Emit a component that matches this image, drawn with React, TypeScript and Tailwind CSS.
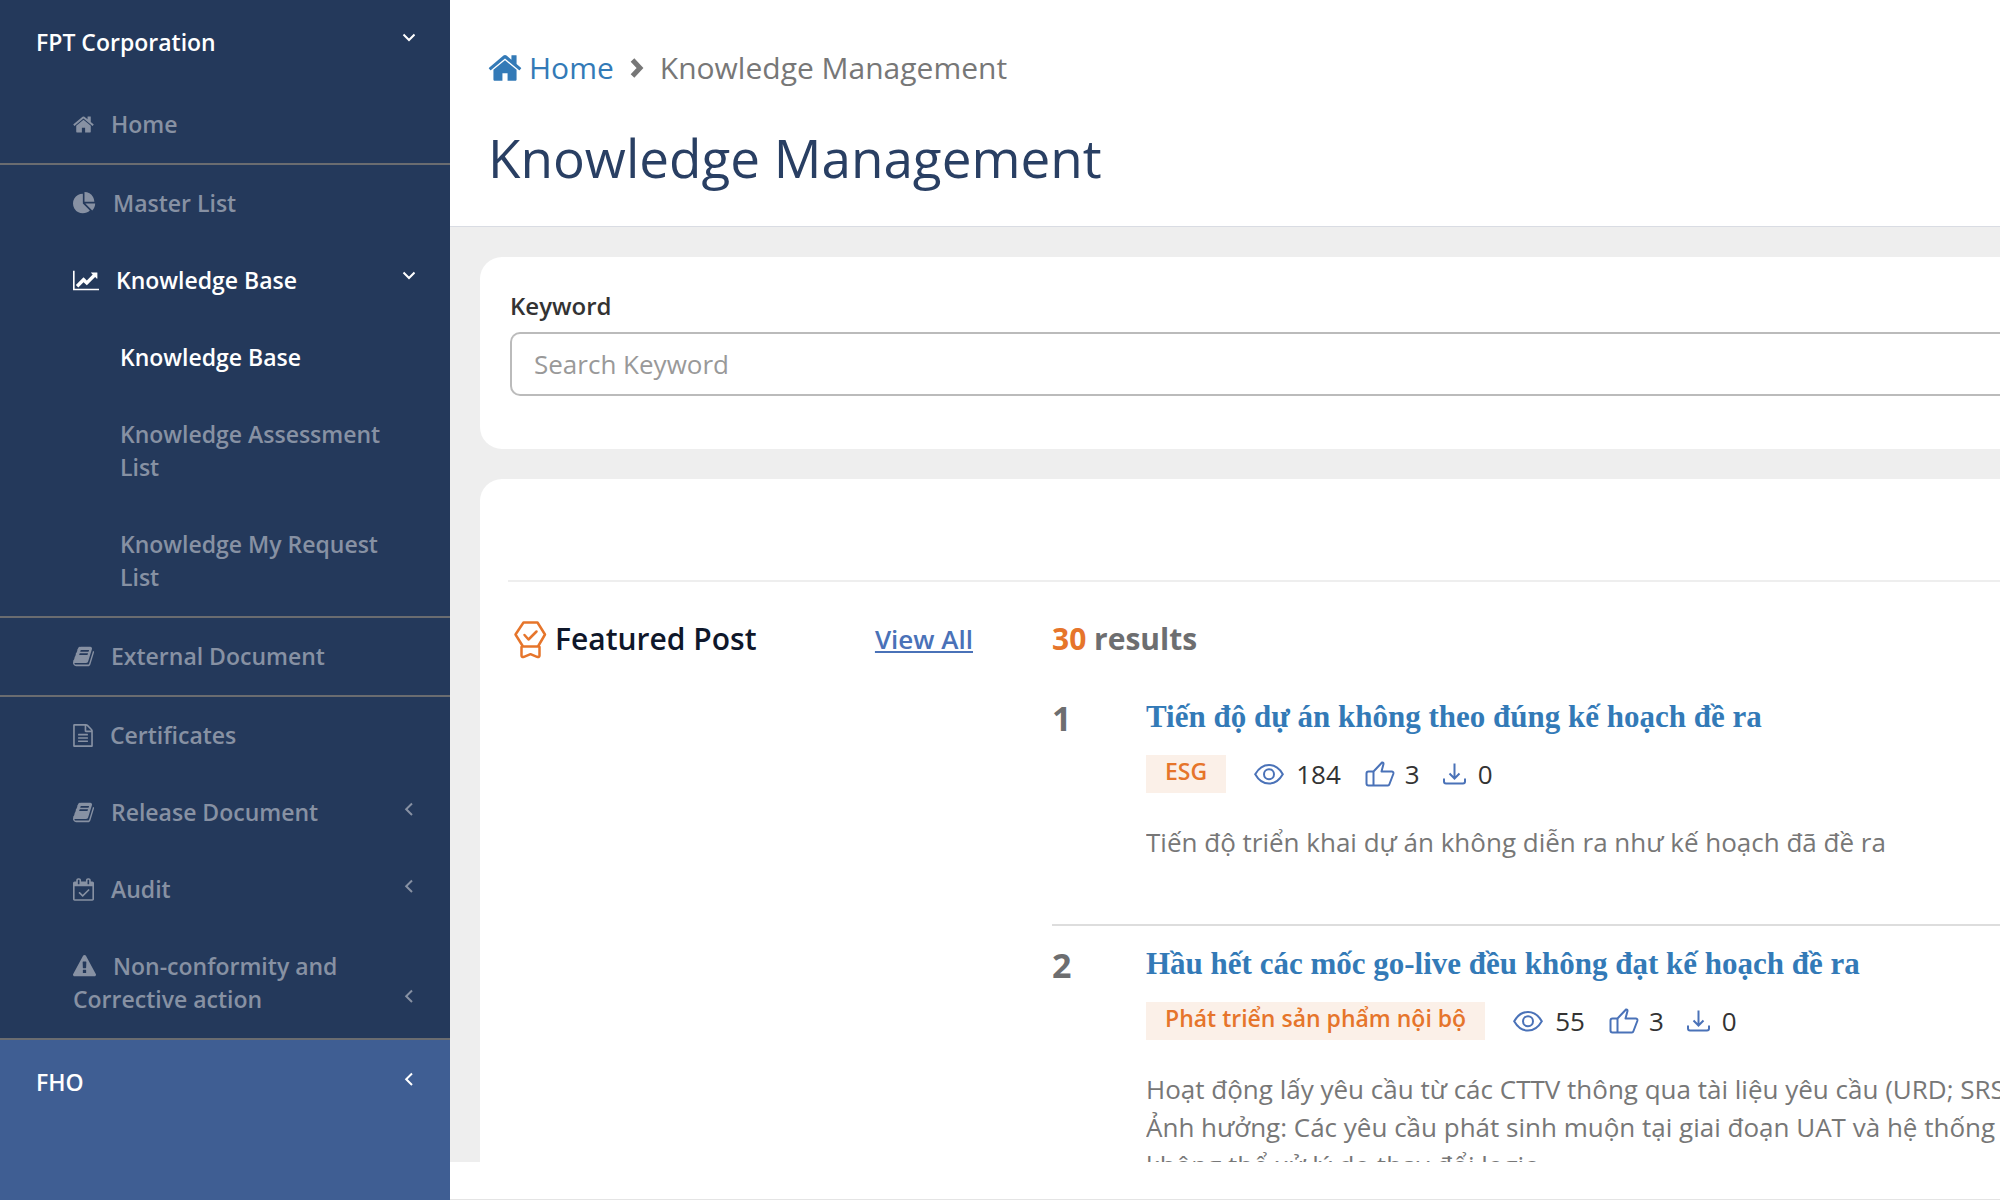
import React from "react";

type IconDef = { viewBox: string; width: number; d: string };

const icons: Record<string, IconDef> = {
  home: {
    viewBox: "0 0 1664 1792",
    width: 21,
    d: "M1408 992v480q0 26-19 45t-45 19h-384v-384h-256v384h-384q-26 0-45-19t-19-45v-480q0-1 .5-3t.5-3l575-474 575 474q1 2 1 6zm223-69l-62 74q-8 9-21 11h-3q-13 0-21-7l-692-577-692 577q-12 8-24 7-13-2-21-11l-62-74q-8-10-7-23.5t11-21.5l719-599q32-26 76-26t76 26l244 204v-195q0-14 9-23t23-9h192q14 0 23 9t9 23v408l219 182q10 8 11 21.5t-7 23.5z",
  },
  pie: {
    viewBox: "0 0 1792 1792",
    width: 23,
    d: "M768 890l546 546q-106 108-247.5 168t-298.5 60q-209 0-385.5-103t-279.5-279.5-103-385.5 103-385.5 279.5-279.5 385.5-103v762zm187 6h773q0 157-60 298.5t-168 247.5zm709-128h-768v-768q209 0 385.5 103t279.5 279.5 103 385.5z",
  },
  chart: {
    viewBox: "0 0 2048 1792",
    width: 26,
    d: "M2048 1536v128h-2048v-1536h128v1408h1920zm-128-1248v435q0 21-19.5 29.5t-35.5-7.5l-121-121-633 633q-10 10-23 10t-23-10l-233-233-416 416-192-192 585-585q10-10 23-10t23 10l233 233 464-464-121-121q-16-16-7.5-35.5t29.5-19.5h435q14 0 23 9t9 23z",
  },
  book: {
    viewBox: "64 0 1664 1792",
    width: 21,
    d: "M1703 478q40 57 18 129l-275 906q-19 64-76.5 107.5t-122.5 43.5h-923q-77 0-148.5-53.5t-99.5-131.5q-24-67-2-127 0-4 3-27t4-37q1-8-3-21.5t-3-19.5q2-11 8-21t16.5-23.5 16.5-23.5q23-38 45-91.5t30-91.5q3-10 .5-30t-.5-28q3-11 17-28t17-23q21-36 42-92t25-90q1-9-2.5-32t.5-28q4-13 22-30.5t22-22.5q19-26 42.5-84.5t27.5-96.5q1-8-3-25.5t-2-26.5q2-8 9-18t18-23 17-21q8-12 16.5-30.5t15-35 16-36 19.5-32 26.5-23.5 36-11.5 47.5 5.5l-1 3q38-9 51-9h761q74 0 114 56t18 130l-274 906q-36 119-71.5 153.5t-128.5 34.5h-869q-27 0-38 15-11 16-1 43 24 70 144 70h923q29 0 56-15.5t35-41.5l300-987q7-22 5-57 38 15 59 43zm-1064 2q-4 13 2 22.5t20 9.5h608q13 0 25.5-9.5t16.5-22.5l21-64q4-13-2-22.5t-20-9.5h-608q-13 0-25.5 9.5t-16.5 22.5zm-83 256q-4 13 2 22.5t20 9.5h608q13 0 25.5-9.5t16.5-22.5l21-64q4-13-2-22.5t-20-9.5h-608q-13 0-25.5 9.5t-16.5 22.5z",
  },
  file: {
    viewBox: "128 0 1536 1792",
    width: 20,
    d: "M1596 380q28 28 48 76t20 88v1152q0 40-28 68t-68 28h-1344q-40 0-68-28t-28-68v-1600q0-40 28-68t68-28h896q40 0 88 20t76 48zm-444-244v376h376q-10-29-22-41l-313-313q-12-12-41-22zm384 1528v-1024h-416q-40 0-68-28t-28-68v-416h-768v1536h1280zm-1024-864q0-14 9-23t23-9h704q14 0 23 9t9 23v64q0 14-9 23t-23 9h-704q-14 0-23-9t-9-23v-64zm736 224q14 0 23 9t9 23v64q0 14-9 23t-23 9h-704q-14 0-23-9t-9-23v-64q0-14 9-23t23-9h704zm0 256q14 0 23 9t9 23v64q0 14-9 23t-23 9h-704q-14 0-23-9t-9-23v-64q0-14 9-23t23-9h704z",
  },
  calendar: {
    viewBox: "0 0 1664 1792",
    width: 21,
    d: "M1303 964l-512 512q-10 9-23 9t-23-9l-288-288q-9-10-9-23t9-22l46-46q9-9 22-9t23 9l220 220 444-444q10-9 23-9t22 9l46 46q9 9 9 22t-9 23zm-1175 700h1408v-1024h-1408v1024zm384-1216v-288q0-14-9-23t-23-9h-64q-14 0-23 9t-9 23v288q0 14 9 23t23 9h64q14 0 23-9t9-23zm768 0v-288q0-14-9-23t-23-9h-64q-14 0-23 9t-9 23v288q0 14 9 23t23 9h64q14 0 23-9t9-23zm384-64v1280q0 52-38 90t-90 38h-1408q-52 0-90-38t-38-90v-1280q0-52 38-90t90-38h128v-96q0-66 47-113t113-47h64q66 0 113 47t47 113v96h384v-96q0-66 47-113t113-47h64q66 0 113 47t47 113v96h128q52 0 90 38t38 90z",
  },
  warning: {
    viewBox: "0 0 1792 1792",
    width: 23,
    d: "M1024 1375v-190q0-14-9.5-23.5t-22.5-9.5h-192q-13 0-22.5 9.5t-9.5 23.5v190q0 14 9.5 23.5t22.5 9.5h192q13 0 22.5-9.5t9.5-23.5zm-2-374l18-459q0-12-10-19-13-11-24-11h-220q-11 0-24 11-10 7-10 21l17 457q0 10 10 16.5t24 6.5h185q14 0 23.5-6.5t10.5-16.5zm-14-934l768 1408q35 63-2 126-17 29-46.5 46t-63.5 17h-1536q-34 0-63.5-17t-46.5-46q-37-63-2-126l768-1408q17-31 47-49t65-18 65 18 47 49z",
  },
};

type NavEntry = {
  label: string;
  icon?: keyof typeof icons;
  arrow?: "down" | "left";
  active?: boolean;
  sub?: boolean;
};

// each group is closed by a divider line
const groups: NavEntry[][] = [
  [{ label: "Home", icon: "home" }],
  [
    { label: "Master List", icon: "pie" },
    { label: "Knowledge Base", icon: "chart", arrow: "down", active: true },
    { label: "Knowledge Base", sub: true, active: true },
    { label: "Knowledge Assessment List", sub: true },
    { label: "Knowledge My Request List", sub: true },
  ],
  [{ label: "External Document", icon: "book" }],
  [
    { label: "Certificates", icon: "file" },
    { label: "Release Document", icon: "book", arrow: "left" },
    { label: "Audit", icon: "calendar", arrow: "left" },
    { label: "Non-conformity and Corrective action", icon: "warning", arrow: "left" },
  ],
];

const posts = [
  {
    title: "Tiến độ dự án không theo đúng kế hoạch đề ra",
    tag: "ESG",
    views: 184,
    likes: 3,
    downloads: 0,
    lines: ["Tiến độ triển khai dự án không diễn ra như kế hoạch đã đề ra"],
  },
  {
    title: "Hầu hết các mốc go-live đều không đạt kế hoạch đề ra",
    tag: "Phát triển sản phẩm nội bộ",
    views: 55,
    likes: 3,
    downloads: 0,
    lines: [
      "Hoạt động lấy yêu cầu từ các CTTV thông qua tài liệu yêu cầu (URD; SRS)",
      "Ảnh hưởng: Các yêu cầu phát sinh muộn tại giai đoạn UAT và hệ thống",
      "không thể xử lý do thay đổi logic",
    ],
  },
];

function Arrow({ dir }: { dir: "down" | "left" }) {
  return (
    <svg width="14" height="33" viewBox="0 0 14 33" fill="none" stroke="currentColor" strokeWidth="2" className="shrink-0">
      <path d={dir === "down" ? "M2.5 8.5L8 14L13.5 8.5" : "M11 7.5L5.2 13.2L11 19"} />
    </svg>
  );
}

function NavItem({ label, icon, arrow, active, sub }: NavEntry) {
  const def = icon ? icons[icon] : null;
  const cls = `flex w-full items-end py-[22px] pr-[35px] text-left ${sub ? "pl-[120px]" : "pl-[73px]"} ${
    active ? "text-white" : "text-[#8791a3]"
  }`;
  const content = (
    <>
      <span className={sub ? "max-w-[270px] flex-1" : "flex-1"}>
        {def && (
          <svg viewBox={def.viewBox} width={def.width} height={23} fill="currentColor" className="mr-[17px] inline-block align-[-3px]">
            <path d={def.d} />
          </svg>
        )}
        {label}
      </span>
      {arrow && <Arrow dir={arrow} />}
    </>
  );
  if (arrow) {
    return (
      <button type="button" className={cls}>
        {content}
      </button>
    );
  }
  return (
    <a href="#" className={cls}>
      {content}
    </a>
  );
}

function Sidebar() {
  return (
    <nav className="flex w-[450px] shrink-0 flex-col bg-[#3f5e93] text-[23px] leading-[33px] font-semibold text-white">
      <div className="bg-[#24395b]">
        <button type="button" className="flex w-full justify-between pt-[26px] pr-[35px] pb-[27px] pl-9 text-left">
          FPT Corporation
          <Arrow dir="down" />
        </button>
        {groups.map((group, i) => (
          <div key={i} className="border-b-2 border-[#6a6c70]">
            {group.map((item, j) => (
              <NavItem key={j} {...item} />
            ))}
          </div>
        ))}
      </div>
      <button type="button" className="flex w-full justify-between py-[26px] pr-[35px] pl-9 text-left">
        FHO
        <Arrow dir="left" />
      </button>
    </nav>
  );
}

function Stats({ views, likes, downloads }: { views: number; likes: number; downloads: number }) {
  return (
    <div className="flex items-center text-[26px] leading-[38px] text-[#333]">
      <svg width="30" height="38" viewBox="0 0 30 38" fill="none" stroke="#4a72b8" strokeWidth="2">
        <path d="M1.2 19.2C4.5 13.5 9 10 15 10S25.500 13.5 28.8 19.2C25.5 25 21 28.500 15 28.5S4.5 25 1.2 19.2Z" />
        <circle cx="15" cy="19.2" r="5" />
      </svg>
      <span className="ml-3">{views}</span>
      <svg width="30" height="38" viewBox="0 0 30 38" fill="none" stroke="#4a72b8" strokeWidth="2" strokeLinejoin="round" className="ml-6">
        <path d="M8.5 16.5H3.5Q1.5 16.500 1.5 18.5V28.5Q1.5 30.5 3.5 30.5H23Q24 30.5 24.5 29L28.3 19Q28.8 16.800 27 16.500H16.5L18.5 9Q18.6 7 17 7.500L8.5 16.500V30.5" />
      </svg>
      <span className="ml-[10px]">{likes}</span>
      <svg width="24" height="38" viewBox="0 0 24 38" fill="none" stroke="#4a72b8" strokeWidth="2" className="ml-[22px]">
        <path d="M12.5 8.5V23.5M7.5 18.5L12.500 23.5L17.500 18.5M2 23.5V26.5Q2 28.5 4 28.5H21Q23 28.5 23 26.500V23.500" />
      </svg>
      <span className="ml-3">{downloads}</span>
    </div>
  );
}

export default function App() {
  return (
    <div className="flex h-screen min-h-[600px] overflow-hidden bg-white font-['Open_Sans','Noto_Sans',sans-serif]">
      <Sidebar />
      <div className="flex min-w-0 flex-1 flex-col border-b border-[#e4e4e4]">
        <header className="shrink-0 border-b border-[#d9dce3] px-[38px] pt-[47px] pb-[31px]">
          <div className="flex items-center text-[30px] leading-[42px] text-[#777]">
            <a href="#" className="flex items-center text-[#337ab7]">
              <svg width="34" height="36" viewBox={icons.home.viewBox} fill="currentColor" className="mr-[7px]">
                <path d={icons.home.d} />
              </svg>
              Home
            </a>
            <svg width="14" height="20" viewBox="0 0 14 20" fill="none" stroke="#777" strokeWidth="5" className="mx-4">
              <path d="M2.5 2L10 10L2.5 18" />
            </svg>
            <span>Knowledge Management</span>
          </div>
          <h1 className="mt-8 text-[53px] leading-[74px] text-[#293f63]">Knowledge Management</h1>
        </header>

        <main className="min-h-0 flex-1 overflow-hidden bg-[#eee] pt-[30px] pl-[30px]">
          <section className="rounded-l-[22px] bg-white pt-8 pb-[53px] pl-[30px]">
            <label htmlFor="keyword" className="block text-[24px] leading-[33px] font-semibold text-[#333]">
              Keyword
            </label>
            <input
              id="keyword"
              type="text"
              placeholder="Search Keyword"
              className="mt-[10px] block h-16 w-full rounded-l-[10px] border-2 border-r-0 border-[#bbb] px-[22px] text-[26px] placeholder:text-[#999]"
            />
          </section>

          <section className="mt-[30px] rounded-l-[22px] bg-white pt-[101px] pl-7">
            <div className="flex border-t-2 border-[#eee] pt-9">
              <div className="flex w-[465px] shrink-0 items-center self-start leading-[42px]">
                <svg width="34" height="40" viewBox="0 0 34 40" fill="none" stroke="#e6752b" strokeWidth="2.5" strokeLinejoin="round" strokeLinecap="round" className="mr-[7px] ml-[6px]">
                  <path d="M9.5 3.5H23.5L31 15.500L24 27.5H9L1.5 15.5Z" />
                  <path d="M10.5 16L14.5 20.5L22.5 12.5" />
                  <path d="M7.5 28V36.5Q7.5 38.5 10 37.8L16.5 35.2L23 37.8Q25.5 38.5 25.5 36.5V28" />
                </svg>
                <h2 className="text-[30px] font-semibold text-[#0f172a]">Featured Post</h2>
                <a href="#" className="ml-auto text-[26px] font-semibold text-[#4a72b8] underline">
                  View All
                </a>
              </div>
              <div className="ml-[79px] min-w-0 flex-1">
                <h2 className="text-[30px] leading-[42px] font-bold text-[#6d6e70]">
                  <span className="text-[#e6752b]">30</span> results
                </h2>
                <ol className="mt-[19px]">
                  {posts.map((post, i) => (
                    <li key={i} className="flex border-b-2 border-[#ddd] pt-4 pb-[63px]">
                      <span className="w-[94px] shrink-0 text-[34px] leading-[46px] font-bold text-[#6d6e70]">{i + 1}</span>
                      <div className="min-w-0 flex-1 overflow-hidden">
                        <a href="#" className="mt-1 block font-['Liberation_Serif',serif] text-[31px] leading-9 font-bold text-[#337ab7]">
                          {post.title}
                        </a>
                        <div className="mt-5 flex gap-7">
                          <span className="bg-[#fbf0e8] px-[19px] pb-[5px] text-[23px] leading-[33px] font-semibold text-[#e6752b]">
                            {post.tag}
                          </span>
                          <Stats views={post.views} likes={post.likes} downloads={post.downloads} />
                        </div>
                        <div className="mt-[30px] text-[26px] leading-[38px] whitespace-nowrap text-[#777]">
                          {post.lines.map((line) => (
                            <p key={line}>{line}</p>
                          ))}
                        </div>
                      </div>
                    </li>
                  ))}
                </ol>
              </div>
            </div>
          </section>
        </main>
        <footer className="h-[37px] shrink-0 bg-white" />
      </div>
    </div>
  );
}
